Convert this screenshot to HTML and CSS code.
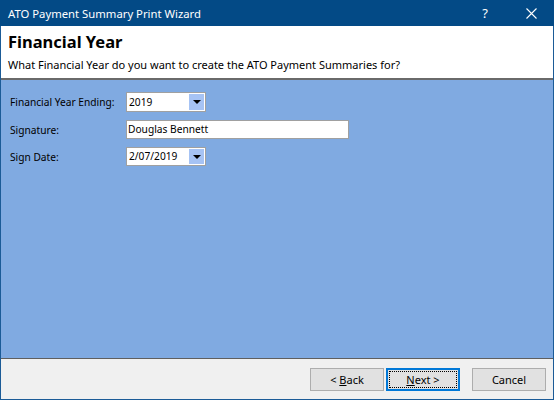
FILE: index.html
```html
<!DOCTYPE html>
<html lang="en">
<head>
  <meta charset="utf-8">
  <title>ATO Payment Summary Print Wizard</title>
  <link rel="stylesheet" href="styles.css">
</head>
<body>
  <div class="window">
    <div class="titlebar">
      <span class="title">ATO Payment Summary Print Wizard</span>
      <span class="help">?</span>
      <span class="close">
        <svg width="11" height="11" viewBox="0 0 11 11"><path d="M0.5 0.5 L10.5 10.5 M10.5 0.5 L0.5 10.5" stroke="#ffffff" stroke-width="1.1" fill="none"/></svg>
      </span>
    </div>

    <div class="header">
      <h2>Financial Year</h2>
      <p>What Financial Year do you want to create the ATO Payment Summaries for?</p>
    </div>

    <div class="content">
      <form class="fields">
        <label>Financial Year Ending:</label>
        <div class="combo">
          <span class="value">2019</span>
          <span class="arrow"></span>
        </div>

        <label>Signature:</label>
        <div class="textbox">Douglas Bennett</div>

        <label>Sign Date:</label>
        <div class="combo date">
          <span class="value">2/07/2019</span>
          <span class="arrow"></span>
        </div>
      </form>
    </div>

    <div class="footer">
      <button class="btn">&lt; <u>B</u>ack</button>
      <button class="btn default"><span class="focus"><u>N</u>ext &gt;</span></button>
      <button class="btn cancel">Cancel</button>
    </div>
  </div>
</body>
</html>
```

FILE: styles.css
```css
body {
  margin: 0;
  padding: 0;
  font-family: "Noto Sans", "DejaVu Sans", sans-serif;
  font-size: 11px;
  color: #000000;
}

.window {
  width: 554px;
  height: 400px;
  box-sizing: border-box;
  border: 1px solid #1b5b97;
  border-top: none;
  display: flex;
  flex-direction: column;
  background-color: #f0f0f0;
}

.titlebar {
  height: 26px;
  flex-shrink: 0;
  margin: 0 -1px;
  background-color: #034a86;
  color: #ffffff;
  display: flex;
  align-items: center;
  padding-left: 8px;
  font-size: 11.3px;
}

.title {
  flex: 1;
}

.help {
  width: 46px;
  text-align: center;
  font-size: 13px;
}

.close {
  width: 46px;
  display: flex;
  justify-content: center;
  align-items: center;
}

.header {
  height: 54px;
  flex-shrink: 0;
  box-sizing: border-box;
  background-color: #ffffff;
  border-bottom: 2px solid #6a6a6a;
  padding-left: 7px;
}

.header h2 {
  margin: 0;
  padding-top: 5px;
  font-size: 16.5px;
  font-weight: 700;
  line-height: 22px;
}

.header p {
  margin: 4px 0 0;
  line-height: 16px;
}

.content {
  flex: 1;
  background-color: #80aae1;
  padding: 12px 0 0 9px;
}

.fields {
  display: grid;
  grid-template-columns: 116px auto;
  grid-template-rows: 20px 19px 19px;
  row-gap: 8px;
  align-items: center;
  justify-items: start;
  font-size: 10.2px;
}

.combo {
  width: 80px;
  height: 20px;
  box-sizing: border-box;
  border: 1px solid #a0a0a0;
  background-color: #ffffff;
  display: flex;
  align-items: stretch;
  padding: 1px;
}

.combo .value {
  flex: 1;
  line-height: 16px;
  padding-left: 1px;
}

.combo .arrow {
  width: 15px;
  background-color: #a6c3f4;
  position: relative;
}

.combo .arrow::after {
  content: "";
  position: absolute;
  left: 4px;
  top: 6px;
  border-left: 4px solid transparent;
  border-right: 4px solid transparent;
  border-top: 4px solid #000000;
}

.date {
  height: 19px;
}

.date .value {
  line-height: 15px;
}

.textbox {
  width: 223px;
  height: 19px;
  box-sizing: border-box;
  border: 1px solid #a0a0a0;
  background-color: #ffffff;
  padding-left: 1px;
  line-height: 17px;
}

.footer {
  height: 41px;
  flex-shrink: 0;
  box-sizing: border-box;
  border-top: 1px solid #5f5f5f;
  background-color: #f0f0f0;
  display: flex;
  justify-content: flex-end;
  align-items: flex-start;
  padding: 9px 7px 0 0;
  gap: 2px;
}

.btn {
  width: 74px;
  height: 23px;
  box-sizing: border-box;
  background-color: #e1e1e1;
  border: 1px solid #adadad;
  border-radius: 0;
  font-family: inherit;
  font-size: 11px;
  color: #000000;
  padding: 0;
}

.btn.default {
  border: 2px solid #0078d7;
  padding: 1px;
}

.focus {
  display: flex;
  height: 100%;
  box-sizing: border-box;
  border: 1px dotted #000000;
  justify-content: center;
  align-items: center;
}

.btn.cancel {
  margin-left: 10px;
}
```
